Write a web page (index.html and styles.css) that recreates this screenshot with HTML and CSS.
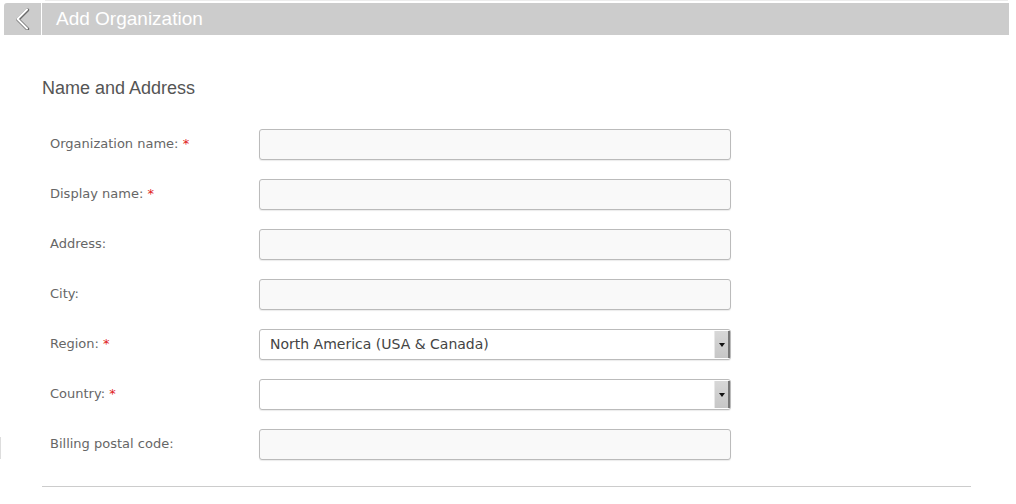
FILE: index.html
```html
<!DOCTYPE html>
<html>
<head>
<meta charset="utf-8">
<link rel="stylesheet" href="styles.css">
</head>
<body>
<div class="topline"></div>
<header class="bar">
  <button class="back" aria-label="Back">
    <svg width="16" height="22" viewBox="0 0 16 22">
      <path d="M13 1.5 L3.5 11 L13 20.5" fill="none" stroke="#6a6a6a" stroke-width="3.4" stroke-linecap="round" stroke-linejoin="round" transform="translate(0.5,0.5)"/>
      <path d="M13 1.5 L3.5 11 L13 20.5" fill="none" stroke="#fff" stroke-width="2" stroke-linecap="round" stroke-linejoin="round"/>
    </svg>
  </button>
  <h1 class="title">Add Organization</h1>
</header>
<main class="content">
  <h2 class="section">Name and Address</h2>
  <div class="form">
    <div class="row"><label class="label">Organization name: <span class="req">*</span></label><input class="field" type="text"></div>
    <div class="row"><label class="label">Display name: <span class="req">*</span></label><input class="field" type="text"></div>
    <div class="row"><label class="label">Address:</label><input class="field" type="text"></div>
    <div class="row"><label class="label">City:</label><input class="field" type="text"></div>
    <div class="row"><label class="label">Region: <span class="req">*</span></label>
      <div class="select"><span class="select-text">North America (USA &amp; Canada)</span><span class="select-btn"><span class="arrow"></span></span></div></div>
    <div class="row"><label class="label">Country: <span class="req">*</span></label>
      <div class="select"><span class="select-text"></span><span class="select-btn"><span class="arrow"></span></span></div></div>
    <div class="row"><label class="label">Billing postal code:</label><input class="field" type="text"></div>
  </div>
  <hr class="divider">
</main>
<div class="edge"></div>
</body>
</html>
```
FILE: styles.css
```css
html, body {
  margin: 0;
  padding: 0;
  background: #fff;
  width: 1016px;
  height: 504px;
  overflow: hidden;
  position: relative;
}
.topline {
  height: 1px;
  margin: 0 8px 0 45px;
  background: #ececec;
}
.bar {
  display: flex;
  align-items: stretch;
  height: 32px;
  margin: 2px 7px 0 4px;
  background: #cccccc;
  border-top-left-radius: 3px;
}
.back {
  width: 38px;
  border: 0;
  border-right: 1px solid #fff;
  background: transparent;
  padding: 0;
  display: flex;
  align-items: center;
  justify-content: center;
  padding-right: 2px;
}
.back svg { display: block; }
.title {
  margin: 0 0 0 14px;
  font: 19px/32px "Liberation Sans", Arial, sans-serif;
  color: #fff;
  font-weight: normal;
}
.content {
  padding: 0 45px 0 42px;
}
.section {
  margin: 42px 0 0 0;
  font: 18px/22px "Liberation Sans", Arial, sans-serif;
  font-weight: normal;
  color: #555;
}
.form {
  margin-top: 30px;
  display: flex;
  flex-direction: column;
  gap: 19px;
}
.row {
  display: flex;
  align-items: center;
  height: 31px;
}
.label {
  width: 217px;
  padding-left: 8px;
  padding-bottom: 2px;
  box-sizing: border-box;
  font: 13px "DejaVu Sans", Verdana, sans-serif;
  color: #666;
}
.req { color: #e02020; }
.field {
  width: 472px;
  height: 31px;
  box-sizing: border-box;
  border: 1px solid #bbb;
  border-radius: 3px;
  background: #f9f9f9;
  box-shadow: 0 1px 1px rgba(0,0,0,0.08);
  margin: 0;
  padding: 0 10px;
}
.select {
  width: 472px;
  height: 31px;
  box-sizing: border-box;
  border: 1px solid #bbb;
  border-radius: 3px;
  background: #fff;
  display: flex;
  align-items: center;
  justify-content: space-between;
  box-shadow: 0 1px 1px rgba(0,0,0,0.08);
}
.select-text {
  padding-left: 10px;
  padding-bottom: 2px;
  font: 14px "DejaVu Sans", Verdana, sans-serif;
  color: #444;
}
.select-btn {
  width: 13px;
  height: 27px;
  background: linear-gradient(#d8d8d8, #c6c6c6);
  border-right: 2px solid #777;
  border-left: 1px solid #e8e8e8;
  display: flex;
  align-items: center;
  justify-content: center;
}
.arrow {
  width: 0;
  height: 0;
  border-left: 3px solid transparent;
  border-right: 3px solid transparent;
  border-top: 4px solid #111;
}
.divider {
  margin: 26px 0 0 0;
  border: 0;
  border-top: 1px solid #ccc;
  width: 929px;
}
.edge {
  position: absolute;
  left: 0;
  top: 437px;
  width: 1px;
  height: 22px;
  background: #ddd;
}
```
